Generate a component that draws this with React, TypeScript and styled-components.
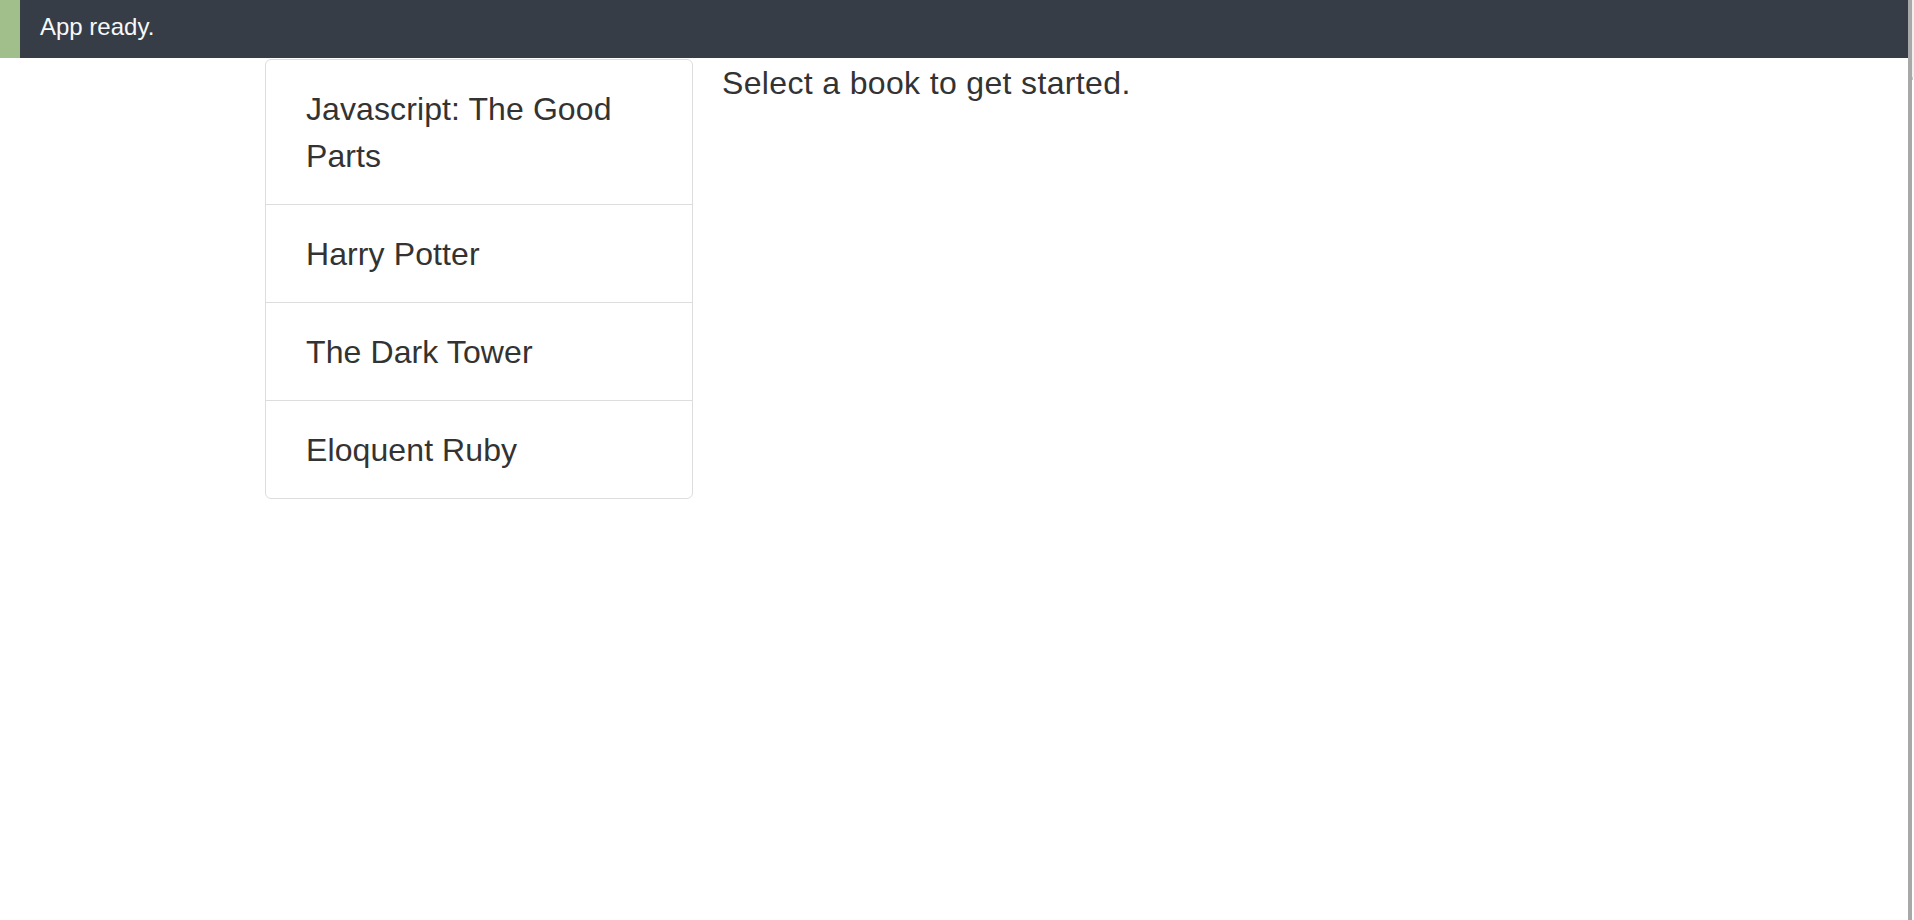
import React from "react";
import styled, { createGlobalStyle } from "styled-components";

const GlobalStyle = createGlobalStyle`
  html, body {
    margin: 0;
    padding: 0;
    background: #fff;
  }
  body {
    font-family: "Liberation Sans", Arial, Helvetica, sans-serif;
    color: #333;
  }
`;

const Page = styled.div`
  display: flex;
  min-height: 920px;
`;

const Main = styled.div`
  flex: 1;
  min-width: 0;
`;

const ScrollGutter = styled.div`
  width: 4px;
  background: #a8a8a8;
`;

const ScrollEdge = styled.div`
  width: 2px;
  display: flex;
  flex-direction: column;
  .track {
    height: 77px;
    background: #efefef;
  }
  .cap {
    width: 1px;
    height: 3px;
    background: #c4c4c4;
  }
`;

const StatusBar = styled.div`
  display: flex;
  align-items: center;
  height: 58px;
  background: #363d47;
  box-sizing: border-box;
  padding-bottom: 4px;
`;

const StatusMark = styled.div<{ $tone: string }>`
  align-self: stretch;
  width: 20px;
  margin-bottom: -4px;
  background: ${(p) => p.$tone};
`;

const StatusText = styled.span`
  margin-left: 20px;
  font-size: 24px;
  line-height: 24px;
  color: #f7f8fa;
`;

const Content = styled.div`
  display: grid;
  grid-template-columns: 428px 1fr;
  column-gap: 29px;
  padding-left: 265px;
  align-items: start;
`;

const BookList = styled.ul`
  list-style: none;
  margin: 1px 0 0;
  padding: 0;
  border: 1px solid #dddddd;
  border-radius: 6px;
  overflow: hidden;
`;

const BookItem = styled.li`
  padding: 26px 40px 24px;
  font-size: 32px;
  line-height: 47px;
  letter-spacing: 0.1px;
  color: #333;
  border-top: 1px solid #dddddd;
  cursor: pointer;
  &:first-child {
    border-top: 0;
  }
`;

const Detail = styled.div`
  padding-top: 2px;
  font-size: 32px;
  line-height: 47px;
  letter-spacing: 0.35px;
  color: #333;
`;

const books = [
  "Javascript: The Good Parts",
  "Harry Potter",
  "The Dark Tower",
  "Eloquent Ruby",
];

export default function App() {
  return (
    <Page>
      <GlobalStyle />
      <Main>
        <StatusBar>
          <StatusMark $tone="#a0bf8a" />
          <StatusText>App ready.</StatusText>
        </StatusBar>
        <Content>
          <BookList>
            {books.map((b) => (
              <BookItem key={b}>{b}</BookItem>
            ))}
          </BookList>
          <Detail>Select a book to get started.</Detail>
        </Content>
      </Main>
      <ScrollGutter />
      <ScrollEdge>
        <div className="track" />
        <div className="cap" />
      </ScrollEdge>
    </Page>
  );
}
